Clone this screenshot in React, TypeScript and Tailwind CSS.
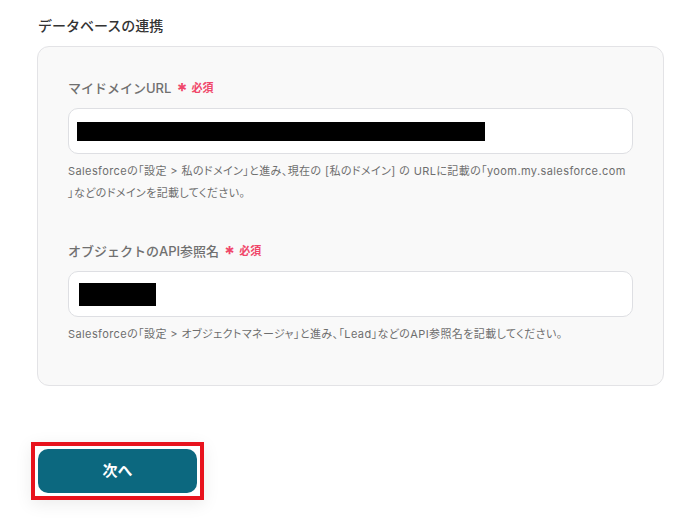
import React from 'react';

const font = { fontFamily: 'Inter, "Noto Sans CJK JP", sans-serif' };

const Required: React.FC = () => (
  <span className="ml-[5px] inline-flex items-center gap-[4px] text-[#f0476a]">
    <span className="text-[20px] font-bold leading-none translate-y-[3px]">*</span>
    <span className="text-[11px] font-bold">必須</span>
  </span>
);

export default function App() {
  return (
    <div className="w-[696px] h-[528px] bg-white overflow-hidden pt-[16px]" style={font}>
      <h2 className="ml-[38px] text-[14px] leading-[20px] font-medium text-[#333333]">データベースの連携</h2>

      <div className="ml-[37px] mt-[10px] w-[627px] rounded-[12px] border border-[#e3e3e6] bg-[#f9f9f9] px-[30px] pt-[31px] pb-[40px]">
        <label className="flex items-center text-[13px] leading-[20px] font-medium text-[#707070]">
          マイドメインURL
          <Required />
        </label>
        <div className="mt-[10px] h-[46px] rounded-[10px] border border-[#dedfe3] bg-white flex items-center px-[8px]">
          <div className="h-[19px] w-[408px] bg-black" />
        </div>
        <p className="mt-[6px] text-[11px] leading-[22px] text-[#6e6e6e] [font-feature-settings:'palt'] tracking-[0.4px]">
          <span className="whitespace-nowrap">
            Salesforceの「設定 &gt; 私のドメイン」と進み、現在の [私のドメイン] の URLに記載の「yoom.my.salesforce.com
          </span>
          <br />」などのドメインを記載してください。
        </p>

        <label className="mt-[37px] flex items-center text-[13px] leading-[20px] font-medium text-[#707070]">
          オブジェクトのAPI参照名
          <Required />
        </label>
        <div className="mt-[10px] h-[46px] rounded-[10px] border border-[#dedfe3] bg-white flex items-center px-[10px]">
          <div className="h-[23px] w-[77px] bg-black" />
        </div>
        <p className="mt-[6px] text-[11px] leading-[22px] text-[#6e6e6e] [font-feature-settings:'palt'] tracking-[0.4px]">
          Salesforceの「設定 &gt; オブジェクトマネージャ」と進み、「Lead」などのAPI参照名を記載してください。
        </p>
      </div>

      <div className="ml-[31px] mt-[56px] inline-block border-[4px] border-[#e8131d] p-[3px] shadow-[0_4px_16px_rgba(0,0,0,0.08)]">
        <button className="flex h-[44px] w-[159px] items-center justify-center rounded-[10px] bg-[#0c687f] text-[15px] font-bold text-white">
          次へ
        </button>
      </div>
    </div>
  );
}
